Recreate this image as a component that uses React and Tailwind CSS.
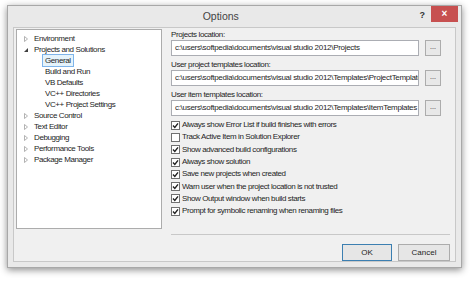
const font = { fontFamily: '"Liberation Sans", Arial, sans-serif' };

const tree = [
  { label: 'Environment', level: 0, arrow: 'closed' },
  { label: 'Projects and Solutions', level: 0, arrow: 'open' },
  { label: 'General', level: 1, selected: true },
  { label: 'Build and Run', level: 1 },
  { label: 'VB Defaults', level: 1 },
  { label: 'VC++ Directories', level: 1 },
  { label: 'VC++ Project Settings', level: 1 },
  { label: 'Source Control', level: 0, arrow: 'closed' },
  { label: 'Text Editor', level: 0, arrow: 'closed' },
  { label: 'Debugging', level: 0, arrow: 'closed' },
  { label: 'Performance Tools', level: 0, arrow: 'closed' },
  { label: 'Package Manager', level: 0, arrow: 'closed' },
];

const paths = [
  ['Projects location:', 'c:\\users\\softpedia\\documents\\visual studio 2012\\Projects'],
  ['User project templates location:', 'c:\\users\\softpedia\\documents\\visual studio 2012\\Templates\\ProjectTemplates'],
  ['User item templates location:', 'c:\\users\\softpedia\\documents\\visual studio 2012\\Templates\\ItemTemplates'],
];

const checks = [
  ['Always show Error List if build finishes with errors', true],
  ['Track Active Item in Solution Explorer', false],
  ['Show advanced build configurations', true],
  ['Always show solution', true],
  ['Save new projects when created', true],
  ['Warn user when the project location is not trusted', true],
  ['Show Output window when build starts', true],
  ['Prompt for symbolic renaming when renaming files', true],
];

function Arrow({ kind }) {
  if (kind === 'open') {
    return (
      <svg width="6" height="6" viewBox="0 0 6 6" className="shrink-0">
        <path d="M5 1 L5 5 L1 5 Z" fill="#404040" />
      </svg>
    );
  }
  return (
    <svg width="6" height="6" viewBox="0 0 6 6" className="shrink-0">
      <path d="M1.5 0.5 L4.5 3 L1.5 5.5 Z" fill="none" stroke="#a0a0a0" strokeWidth="0.8" />
    </svg>
  );
}

function Check({ on }) {
  return (
    <div className="w-[9px] h-[9px] border border-[#707070] bg-white flex items-center justify-center shrink-0">
      {on && (
        <svg width="7" height="7" viewBox="0 0 7 7">
          <path d="M1 3.6 L2.8 5.4 L6 1.4" fill="none" stroke="#202020" strokeWidth="1.4" />
        </svg>
      )}
    </div>
  );
}

export default function App() {
  return (
    <div className="w-[474px] h-[284px] bg-white overflow-hidden pt-[5px] pl-[7px] text-[#1e1e1e]" style={font}>
      <div className="w-[455px] h-[263px] bg-[#e9e9e9] border border-[#a8a8a8] shadow-[0_2px_7px_rgba(0,0,0,0.45)] flex flex-col">
        {/* title bar */}
        <div className="h-[21px] flex items-start">
          <div className="flex-1 text-center text-[10.5px] leading-[20px] text-[#444] pl-[14px]">Options</div>
          <div className="text-[9px] font-bold text-[#333] leading-[18px] mr-[6px]">?</div>
          <div className="w-[27px] h-[16px] bg-[#c75050] flex items-center justify-center mr-[3px]">
            <span className="text-white text-[10px] font-bold leading-none">×</span>
          </div>
        </div>
        {/* client */}
        <div className="ml-[5px] w-[443px] h-[235px] bg-[#f0f0f0] border border-[#c8c8c8] flex pt-[1px] pl-[2px]">
          <div className="w-[146px] h-[200px] bg-white border border-[#acacac] pt-[3px]">
            {tree.map((t) => (
              <div key={t.label} className="h-[11px] flex items-center text-[8px] tracking-[-0.4px]">
                {t.level === 0 ? (
                  <div className="pl-[6px] flex items-center gap-[5px]">
                    <Arrow kind={t.arrow} />
                    <span>{t.label}</span>
                  </div>
                ) : (
                  <div className="pl-[25px]">
                    <span className={t.selected ? 'px-[2px] py-[1px] border border-[#7eb4ea] bg-[#e5f3fb]' : 'px-[3px]'}>
                      {t.label}
                    </span>
                  </div>
                )}
              </div>
            ))}
          </div>
          <div className="flex-1 pl-[9px] pr-[5px] flex flex-col">
            <div className="flex flex-col gap-[3px]">
              {paths.map(([label, value]) => (
                <div key={label} className="flex flex-col">
                  <div className="text-[8px] leading-[11px] tracking-[-0.4px]">{label}</div>
                  <div className="flex items-center gap-[6px]">
                    <div className="w-[248px] h-[16px] bg-white border border-[#abadb3] text-[8px] leading-[14px] tracking-[-0.3px] px-[3px] overflow-hidden whitespace-nowrap">
                      {value}
                    </div>
                    <div className="w-[16px] h-[16px] border border-[#acacac] bg-[#e8e8e8] text-[7px] leading-[12px] text-center">...</div>
                  </div>
                </div>
              ))}
            </div>
            <div className="flex flex-col mt-[3px]">
              {checks.map(([label, on]) => (
                <div key={label} className="h-[12.3px] flex items-center gap-[2px] text-[8px] tracking-[-0.4px]">
                  <Check on={on} />
                  <span>{label}</span>
                </div>
              ))}
            </div>
            <div className="mt-[17px] h-px bg-[#c8c8c8]" />
            <div className="flex justify-end gap-[6px] mt-[9px]">
              <div className="w-[50px] h-[17px] border border-[#3c7fb1] bg-[#e6e6e6] text-[8px] leading-[15px] text-center">OK</div>
              <div className="w-[52px] h-[17px] border border-[#acacac] bg-[#e6e6e6] text-[8px] leading-[15px] text-center">Cancel</div>
            </div>
          </div>
        </div>
      </div>
    </div>
  );
}
